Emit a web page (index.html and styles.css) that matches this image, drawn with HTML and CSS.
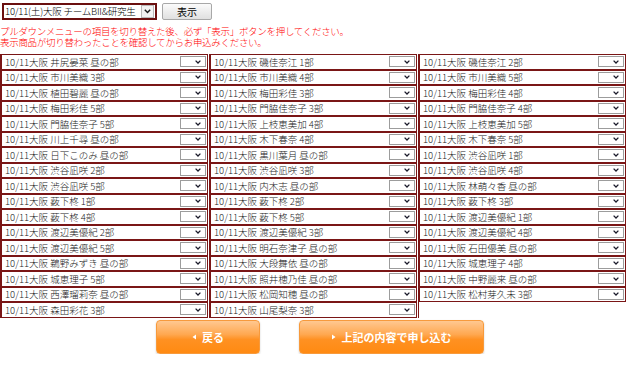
FILE: index.html
```html
<!DOCTYPE html>
<html lang="ja">

<head>
    <meta charset="UTF-8" />
    <meta name="viewport" content="width=device-width, initial-scale=1" />
    <title>個別握手会 申込</title>

    <link rel="stylesheet" href="styles.css">
</head>

<body>

    <form class="picker">
        <div class="event-select">
            <span class="event-name">10/11(土)大阪 チームBII&amp;研究生</span>
            <span class="event-arrow">
                <svg width="7" height="5" viewBox="0 0 7 5"><path d="M0.8 0.8 L3.5 3.6 L6.2 0.8" fill="none" stroke="#1a1a1a" stroke-width="1.4"/></svg>
            </span>
        </div>
        <button type="button" class="show-btn">表示</button>
    </form>

    <p class="notice">プルダウンメニューの項目を切り替えた後、必ず「表示」ボタンを押してください。<br>表示商品が切り替わったことを確認してからお申込みください。</p>

    <div class="slots" id="slots"></div>

    <div class="actions">
        <button type="button" class="action-btn back">
            <svg width="4" height="6" viewBox="0 0 4 6"><path d="M4 0.5 L0.5 3 L4 5.5 Z" fill="#fff"/></svg>
            戻る
        </button>
        <button type="button" class="action-btn apply">
            <svg width="4" height="6" viewBox="0 0 4 6"><path d="M0 0.5 L3.5 3 L0 5.5 Z" fill="#fff"/></svg>
            上記の内容で申し込む
        </button>
    </div>

    <script>
        const columns = [
            ['井尻晏菜 昼の部', '市川美織 3部', '植田碧麗 昼の部', '梅田彩佳 5部', '門脇佳奈子 5部', '川上千尋 昼の部',
             '日下このみ 昼の部', '渋谷凪咲 2部', '渋谷凪咲 5部', '薮下柊 1部', '薮下柊 4部', '渡辺美優紀 2部',
             '渡辺美優紀 5部', '鵜野みずき 昼の部', '城恵理子 5部', '西澤瑠莉奈 昼の部', '森田彩花 3部'],
            ['磯佳奈江 1部', '市川美織 4部', '梅田彩佳 3部', '門脇佳奈子 3部', '上枝恵美加 4部', '木下春奈 4部',
             '黒川葉月 昼の部', '渋谷凪咲 3部', '内木志 昼の部', '薮下柊 2部', '薮下柊 5部', '渡辺美優紀 3部',
             '明石奈津子 昼の部', '大段舞依 昼の部', '照井穂乃佳 昼の部', '松岡知穂 昼の部', '山尾梨奈 3部'],
            ['磯佳奈江 2部', '市川美織 5部', '梅田彩佳 4部', '門脇佳奈子 4部', '上枝恵美加 5部', '木下春奈 5部',
             '渋谷凪咲 1部', '渋谷凪咲 4部', '林萌々香 昼の部', '薮下柊 3部', '渡辺美優紀 1部', '渡辺美優紀 4部',
             '石田優美 昼の部', '城恵理子 4部', '中野麗来 昼の部', '松村芽久未 3部']
        ];

        const chevron = '<svg width="6" height="4" viewBox="0 0 6 4"><path d="M0.6 0.6 L3 3 L5.4 0.6" fill="none" stroke="#1a1a2a" stroke-width="1.3"/></svg>';

        const slots = document.getElementById('slots');
        columns.forEach(names => {
            const col = document.createElement('div');
            col.className = 'slot-col';
            names.forEach(name => {
                const row = document.createElement('div');
                row.className = 'slot';
                row.innerHTML = `<span class="slot-name">10/11大阪 ${name}</span><span class="pick">${chevron}</span>`;
                col.appendChild(row);
            });
            slots.appendChild(col);
        });
    </script>
</body>

</html>
```

FILE: styles.css
```css
:root {
    --maroon: #7a1616;
    --red: #ff0000;
    --grey-border: #9c9c9c;
}

body {
    margin: 0;
    font-family: 'Noto Sans CJK JP', sans-serif;
    font-size: 9.5px;
    font-weight: 300;
    color: #1a1a1a;
    background: #fff;
}

.picker {
    display: flex;
    align-items: center;
    gap: 5px;
    margin: 0;
    padding: 3px 0 0 2px;
}

.event-select {
    display: flex;
    align-items: center;
    width: 155px;
    height: 17px;
    box-sizing: border-box;
    border: 2px solid #6a0f0f;
    background: #fff;
}

.event-name {
    flex: 1;
    padding-left: 1px;
    white-space: nowrap;
    overflow: hidden;
    font-size: 9.5px;
    letter-spacing: -0.2px;
    line-height: 13px;
    color: #000;
}

.event-arrow {
    width: 11px;
    height: 11px;
    margin-right: 1px;
    border: 1px solid #b8b8b8;
    background: #f2f2f2;
    display: flex;
    align-items: center;
    justify-content: center;
}

.show-btn {
    width: 50px;
    height: 17px;
    padding: 0;
    border: 1px solid #a8a8a8;
    border-radius: 2px;
    background: linear-gradient(#fbfbfb, #e0e0e0);
    font-family: inherit;
    font-size: 10px;
    color: #000;
}

.notice {
    margin: 6px 0 0;
    color: var(--red);
    line-height: 11px;
    letter-spacing: -0.3px;
}

.slots {
    display: flex;
    gap: 1px;
    width: 626px;
    margin-top: 6px;
}

.slot-col {
    width: 208px;
    box-sizing: border-box;
    border-left: 1px solid var(--maroon);
    display: flex;
    flex-direction: column;
}

.slot {
    display: flex;
    align-items: center;
    justify-content: space-between;
    height: 15.5px;
    box-sizing: border-box;
    border: 1px solid var(--maroon);
    padding: 0 1px 0 3px;
}

.slot-name {
    white-space: nowrap;
    line-height: 12px;
}

.pick {
    width: 26px;
    height: 11px;
    box-sizing: border-box;
    border: 1px solid var(--grey-border);
    background: #fff;
    display: flex;
    align-items: center;
    justify-content: flex-end;
    padding-right: 4px;
}

.actions {
    display: flex;
    justify-content: center;
    gap: 39px;
    margin-top: 2px;
}

.action-btn {
    height: 34px;
    padding: 0;
    border: 1px solid #f79a3c;
    border-radius: 4px;
    background: linear-gradient(to bottom, #ffc891 0%, #ffa850 42%, #ff9122 58%, #ff8a12 100%);
    box-shadow: 0 1px 2px rgba(0, 0, 0, 0.2);
    color: #fff;
    font-family: inherit;
    font-size: 11px;
    font-weight: bold;
    display: flex;
    align-items: center;
    justify-content: center;
    gap: 6px;
}

.back {
    width: 104px;
}

.apply {
    width: 185px;
}
```
